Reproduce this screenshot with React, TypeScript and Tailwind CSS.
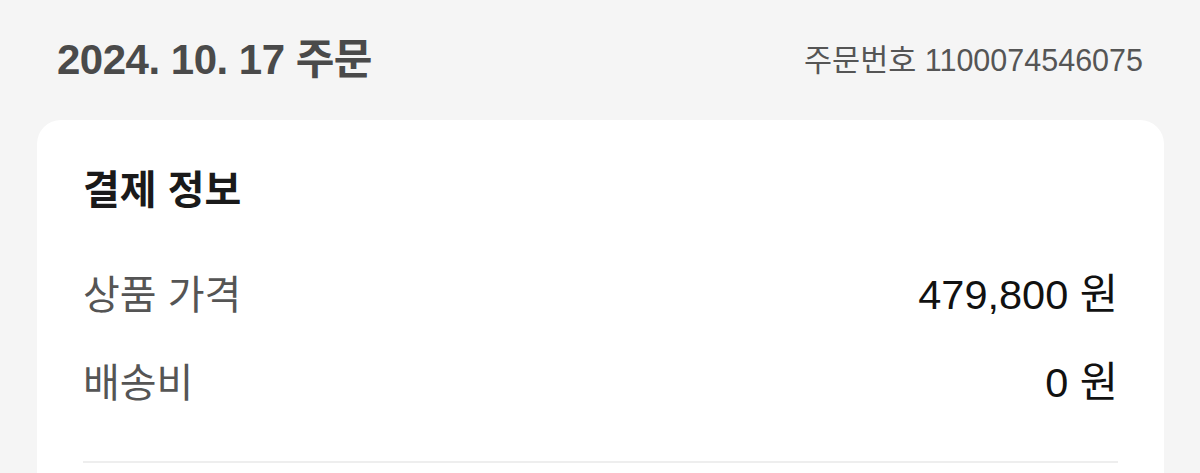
export default function App() {
  const font = { fontFamily: '"Liberation Sans", "Noto Sans CJK KR", sans-serif' };
  return (
    <div className="min-h-screen bg-[#f5f5f5] pl-[37px] pr-[36px]" style={font}>
      <div className="flex h-[120px] items-center justify-between pl-[20px] pr-[21px]">
        <h1 className="text-[42px] font-bold leading-none tracking-[-0.5px] text-[#4a4a4a]">2024. 10. 17 주문</h1>
        <span className="text-[30.5px] leading-none text-[#555]">주문번호 1100074546075</span>
      </div>
      <div className="rounded-[24px] bg-white px-[46px] pt-[46px] pb-[40px]">
        <h2 className="text-[40px] font-bold leading-[48px] text-[#1a1a1a]">결제 정보</h2>
        <div className="mt-[57px] flex h-[48px] items-center justify-between text-[40px] leading-none">
          <span className="text-[#555]">상품 가격</span>
          <span className="text-[41.5px] text-[#111]">479,800 원</span>
        </div>
        <div className="mt-[40px] flex h-[48px] items-center justify-between text-[40px] leading-none">
          <span className="text-[#555]">배송비</span>
          <span className="text-[41.5px] text-[#111]">0 원</span>
        </div>
        <div className="mt-[54px] h-[2px] bg-[#eeeeee]" />
      </div>
    </div>
  );
}
